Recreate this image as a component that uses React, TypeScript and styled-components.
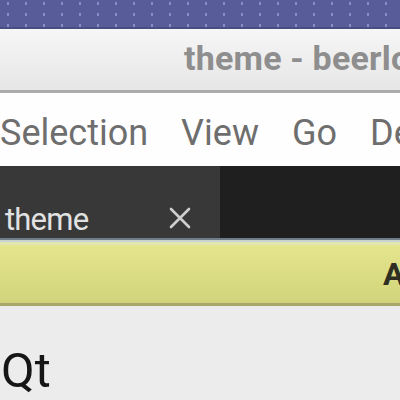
import React from "react";
import styled, { createGlobalStyle } from "styled-components";

const Global = createGlobalStyle`
  html, body { margin: 0; padding: 0; background: #ececec; }
  body { font-family: Roboto, "Open Sans", sans-serif; }
  *, *::before, *::after { box-sizing: border-box; }
`;

const Window = styled.div`
  width: 400px;
  height: 400px;
  overflow: hidden;
  display: flex;
  flex-direction: column;
`;

const TopStrip = styled.div`
  height: 29px;
  flex: none;
  background-color: #585c98;
  background-image: radial-gradient(circle, rgba(180, 186, 230, 0.55) 0 1.1px, transparent 1.5px);
  background-size: 18px 11px;
  background-position: -1px -2px;
  border-bottom: 2px solid #4a4d82;
`;

const TitleBar = styled.div`
  height: 64px;
  flex: none;
  background: linear-gradient(#f6f6f6, #e6e6e6);
  border-bottom: 3px solid #ababab;
  padding: 12px 0 0 184px;
  overflow: hidden;
  white-space: nowrap;
`;

const TitleText = styled.span`
  font-family: Roboto, sans-serif;
  font-weight: 700;
  font-size: 34px;
  line-height: 34px;
  color: #8e8e8e;
  letter-spacing: 0.2px;
`;

const MenuBar = styled.div`
  height: 73px;
  flex: none;
  background: #fefefe;
  padding-top: 22px;
  display: flex;
  gap: 33px;
  white-space: nowrap;
  overflow: hidden;
`;

const MenuItem = styled.span`
  font-family: Roboto, sans-serif;
  font-size: 36px;
  line-height: 36px;
  color: #6e6e6e;
`;

const TabBar = styled.div`
  height: 72px;
  flex: none;
  background: #1f1f1f;
  display: flex;
`;

const Tab = styled.div`
  width: 220px;
  background: #383838;
  display: flex;
  align-items: flex-start;
  padding: 38px 0 0 5px;
  position: relative;
`;

const TabLabel = styled.span`
  font-family: Roboto, sans-serif;
  font-size: 31px;
  line-height: 31px;
  color: #e2e2e2;
  letter-spacing: -0.8px;
`;

const CloseIcon = styled.svg`
  position: absolute;
  left: 169px;
  top: 41px;
  width: 22px;
  height: 22px;
`;

const Divider = styled.div`
  height: 7px;
  flex: none;
  background: linear-gradient(#6f7d88 0 2px, #c9d3cf 2px 4px, #e2e6b0 4px);
`;

const InfoBar = styled.div`
  height: 61px;
  flex: none;
  background: linear-gradient(#e4e58c, #d2d47b);
  border-bottom: 3px solid #a6a86a;
  padding: 13px 0 0 383px;
  overflow: hidden;
  white-space: nowrap;
`;

const InfoText = styled.span`
  font-family: Roboto, sans-serif;
  font-weight: 700;
  font-size: 32px;
  line-height: 32px;
  color: #2e2e22;
`;

const Content = styled.div`
  flex: 1;
  background: #ececec;
  padding: 40px 0 0 1px;
`;

const Heading = styled.span`
  font-family: Roboto, sans-serif;
  font-size: 49px;
  line-height: 49px;
  color: #161616;
`;

export default function App() {
  return (
    <>
      <Global />
      <Window>
        <TopStrip />
        <TitleBar>
          <TitleText>theme - beerlook</TitleText>
        </TitleBar>
        <MenuBar>
          <MenuItem>Selection</MenuItem>
          <MenuItem>View</MenuItem>
          <MenuItem>Go</MenuItem>
          <MenuItem>Debug</MenuItem>
        </MenuBar>
        <TabBar>
          <Tab>
            <TabLabel>theme</TabLabel>
            <CloseIcon viewBox="0 0 22 22">
              <path d="M2 2 L20 20 M20 2 L2 20" stroke="#cfcfcf" strokeWidth="2.6" strokeLinecap="round" />
            </CloseIcon>
          </Tab>
        </TabBar>
        <Divider />
        <InfoBar>
          <InfoText>About</InfoText>
        </InfoBar>
        <Content>
          <Heading>Qt</Heading>
        </Content>
      </Window>
    </>
  );
}
